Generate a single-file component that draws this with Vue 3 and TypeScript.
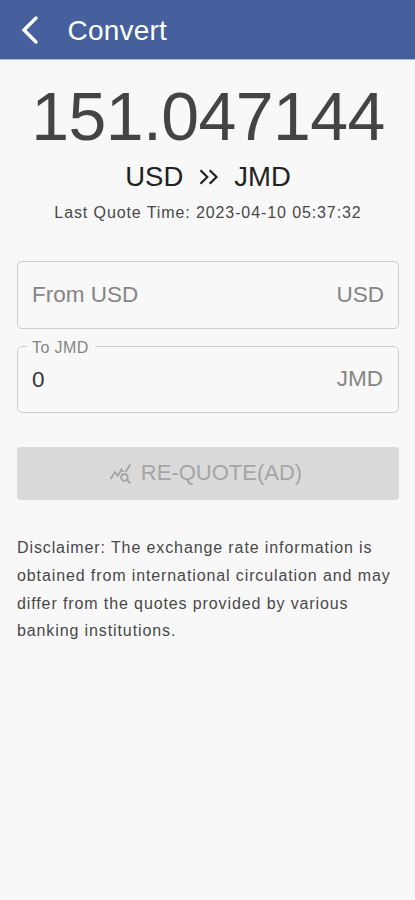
<script setup lang="ts">
import { ref } from 'vue'

const rate = ref('151.047144')
const from = ref('USD')
const to = ref('JMD')
const quoteTime = ref('2023-04-10 05:37:32')
const result = ref(0)
</script>

<template>
  <div class="screen">
    <header class="bar">
      <svg class="back" viewBox="0 0 20 30" aria-hidden="true">
        <path d="M17 3 5 15l12 12" />
      </svg>
      <h1 class="title"><span>Convert</span></h1>
    </header>

    <main class="content">
      <section class="quote">
        <div class="rate">{{ rate }}</div>
        <div class="pair">
          <span>{{ from }}</span>
          <svg class="arrows" viewBox="0 0 20 16" aria-hidden="true">
            <path d="m1.5 1.2 6.8 6.8-6.8 6.8M10.7 1.2 17.5 8l-6.8 6.8" />
          </svg>
          <span>{{ to }}</span>
        </div>
        <div class="time"><span>Last Quote Time: {{ quoteTime }}</span></div>
      </section>

      <div class="field">
        <span class="placeholder">From {{ from }}</span>
        <span class="unit">{{ from }}</span>
      </div>

      <fieldset class="field notched">
        <legend><span>To {{ to }}</span></legend>
        <div class="row">
          <span class="value">{{ result }}</span>
          <span class="unit">{{ to }}</span>
        </div>
      </fieldset>

      <button class="requote" type="button" disabled>
        <svg class="stats" viewBox="0 0 24 24" aria-hidden="true">
          <path d="M19.88 18.47c.44-.7.7-1.51.7-2.39 0-2.49-2.01-4.5-4.5-4.5s-4.5 2.01-4.5 4.5 2.01 4.5 4.49 4.5c.88 0 1.7-.26 2.39-.7L21.58 23 23 21.58l-3.12-3.11zm-3.8.11c-1.38 0-2.5-1.12-2.5-2.5s1.12-2.5 2.5-2.5 2.5 1.12 2.5 2.5-1.12 2.5-2.5 2.5zm-.36-8.5c-.74.02-1.45.18-2.1.45l-.55-.83-3.8 6.18-3.01-3.52-3.63 5.81L1 17l5-8 3 3.5L13 6l2.72 4.08zm2.59.5c-.64-.28-1.33-.45-2.05-.49L21.38 2 23 3.18l-4.69 7.4z" />
        </svg>
        <span>RE-QUOTE(AD)</span>
      </button>

      <p class="disclaimer">
        Disclaimer: The exchange rate information is obtained from international
        circulation and may differ from the quotes provided by various banking
        institutions.
      </p>
    </main>
  </div>
</template>

<style>
body {
  background: #f8f8f8;
}
</style>

<style scoped>
.screen {
  box-sizing: border-box;
  min-height: 900px;
  background: #f8f8f8;
  color: #484848;
  font-family: "Liberation Sans", Arial, sans-serif;
}
.bar {
  box-sizing: border-box;
  display: flex;
  align-items: center;
  height: 60px;
  padding-left: 19px;
  background: #465f9d;
  border-bottom: 1px solid #aab6d2;
}
.back {
  width: 20px;
  height: 30px;
  fill: none;
  stroke: #fff;
  stroke-width: 3.4;
  stroke-linecap: round;
}
.title {
  margin: 2px 0 0 28.5px;
  color: #fff;
  font-size: 28px;
  font-weight: 400;
  letter-spacing: 0.2px;
  line-height: 32px;
}
.content {
  padding: 0 16px 0 17px;
}
.quote {
  display: flex;
  flex-direction: column;
  align-items: center;
}
.rate {
  margin-top: 21px;
  color: #444;
  font-size: 68px;
  letter-spacing: -0.6px;
  line-height: 70px;
  white-space: nowrap;
}
.pair {
  display: flex;
  align-items: center;
  margin-top: 10px;
  color: #222;
  font-size: 27.5px;
  line-height: 32px;
}
.arrows {
  width: 20px;
  height: 16px;
  margin: 0 15px 0 16px;
  fill: none;
  stroke: #222;
  stroke-width: 2.2;
}
.time {
  margin-top: 10px;
  font-size: 16px;
  letter-spacing: 0.9px;
  line-height: 20px;
  white-space: nowrap;
}
.field {
  box-sizing: border-box;
  display: flex;
  align-items: center;
  justify-content: space-between;
  height: 68px;
  margin-top: 38px;
  padding: 0 14px 0;
  border: 1px solid #cecece;
  border-radius: 5px;
  color: #858585;
  font-size: 22.5px;
  line-height: 26px;
}
.notched {
  display: block;
  min-width: 0;
  height: 76px;
  margin: 8px 0 0;
  padding: 0 15px 0 9px;
}
.notched legend {
  height: 18px;
  padding: 0 6px 0 5px;
  font-size: 16px;
  letter-spacing: 0.4px;
  line-height: 22px;
}
.row {
  display: flex;
  align-items: center;
  justify-content: space-between;
  margin-top: 10px;
  padding-left: 5px;
}
.value {
  padding-top: 2px;
  margin-bottom: -1px;
  color: #333;
}
.requote {
  box-sizing: border-box;
  display: flex;
  align-items: center;
  justify-content: center;
  width: 100%;
  height: 53px;
  margin-top: 34px;
  padding: 0 5px 2px 0;
  border: 0;
  border-radius: 4px;
  background: #dadada;
  color: #a5a5a5;
  font-family: inherit;
  font-size: 22px;
  letter-spacing: 0;
  line-height: 26px;
}
.stats {
  width: 23px;
  height: 23px;
  margin: 1px 9px 0 0;
  fill: currentColor;
}
.disclaimer {
  margin: 34px 0 0;
  font-size: 16px;
  letter-spacing: 0.89px;
  line-height: 27.8px;
}
</style>
